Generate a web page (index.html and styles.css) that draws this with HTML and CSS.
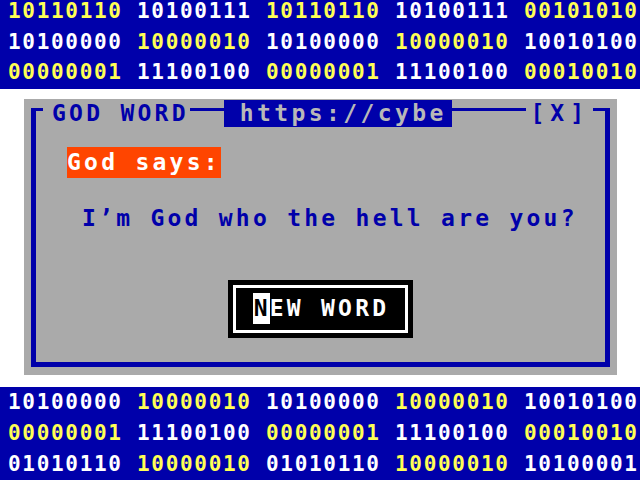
FILE: index.html
```html
<!DOCTYPE html>
<html>
<head>
<meta charset="utf-8">
<link rel="stylesheet" href="styles.css">
</head>
<body>
<div class="band band-top">
  <div class="rows">
    <span class="y">10110110</span><span class="w">10100111</span><span class="y">10110110</span><span class="w">10100111</span><span class="y">00101010</span>
    <span class="w">10100000</span><span class="y">10000010</span><span class="w">10100000</span><span class="y">10000010</span><span class="w">10010100</span>
    <span class="y">00000001</span><span class="w">11100100</span><span class="y">00000001</span><span class="w">11100100</span><span class="y">00010010</span>
  </div>
</div>
<div class="gap"></div>
<div class="dialog">
  <div class="frame">
    <div class="header">
      <span class="title">GOD WORD</span>
      <span class="url">https://cybe</span>
      <span class="close">[X]</span>
    </div>
    <div class="says">God says:</div>
    <div class="message">I’m God who the hell are you?</div>
    <div class="btn"><div class="btn-inner"><span class="cursor">N</span>EW WORD</div></div>
  </div>
</div>
<div class="band band-bottom">
  <div class="rows">
    <span class="w">10100000</span><span class="y">10000010</span><span class="w">10100000</span><span class="y">10000010</span><span class="w">10010100</span>
    <span class="y">00000001</span><span class="w">11100100</span><span class="y">00000001</span><span class="w">11100100</span><span class="y">00010010</span>
    <span class="w">01010110</span><span class="y">10000010</span><span class="w">01010110</span><span class="y">10000010</span><span class="w">10100001</span>
  </div>
</div>
</body>
</html>
```
FILE: styles.css
```css
html, body {
  margin: 0;
  padding: 0;
  background: #ffffff;
}
body {
  width: 640px;
  height: 480px;
  overflow: hidden;
  font-family: "DejaVu Sans Mono", "Liberation Mono", monospace;
  font-weight: bold;
}
.band {
  background: #0000aa;
  overflow: hidden;
  font-size: 21px;
  letter-spacing: 1.69px;
}
.band-top {
  height: 89px;
}
.band-top .rows {
  margin-top: -4px;
  grid-auto-rows: 30.5px;
}
.band-bottom {
  height: 93px;
}
.rows {
  display: grid;
  grid-template-columns: repeat(5, 129px);
  grid-auto-rows: 31px;
  line-height: 31px;
  padding-left: 8px;
  white-space: nowrap;
}
.y { color: #ffff55; }
.w { color: #ffffff; }
.gap {
  height: 10px;
}
.dialog {
  box-sizing: border-box;
  width: 593px;
  height: 276px;
  margin-left: 24px;
  margin-bottom: 12px;
  padding: 9px 7px 8px 7px;
  background: #aaaaaa;
  font-size: 23px;
  letter-spacing: 3.25px;
  color: #0000aa;
}
.frame {
  box-sizing: border-box;
  height: 100%;
  border: 5px solid #0000aa;
  border-top-width: 3px;
  display: flex;
  flex-direction: column;
}
.header {
  display: flex;
  height: 27px;
  margin-top: -11px;
  line-height: 27px;
  white-space: nowrap;
}
.title {
  background: #aaaaaa;
  margin-left: 7px;
  padding-left: 9px;
  padding-right: 1px;
}
.url {
  box-sizing: border-box;
  width: 228px;
  margin-left: 34px;
  padding-left: 16px;
  background: #0000aa;
  color: #b8b8b8;
  letter-spacing: 3.4px;
}
.close {
  margin-left: auto;
  margin-right: 12px;
  padding: 0 3px 0 4px;
  background: #aaaaaa;
  letter-spacing: 6px;
}
.says {
  align-self: flex-start;
  margin-top: 20px;
  margin-left: 31px;
  background: #ff4500;
  color: #ffffff;
  line-height: 31px;
  white-space: nowrap;
}
.message {
  margin-top: 25px;
  margin-left: 46px;
  line-height: 31px;
  white-space: nowrap;
}
.btn {
  align-self: center;
  margin-top: 46px;
  background: #000000;
  padding: 5px;
}
.btn-inner {
  border: 3px solid #ffffff;
  padding: 5px 16px 6px 17px;
  color: #ffffff;
  line-height: 31px;
  white-space: nowrap;
}
.cursor {
  display: inline-block;
  background: #ffffff;
  color: #000000;
  width: 17px;
  letter-spacing: 0;
  text-indent: 1px;
}
```
